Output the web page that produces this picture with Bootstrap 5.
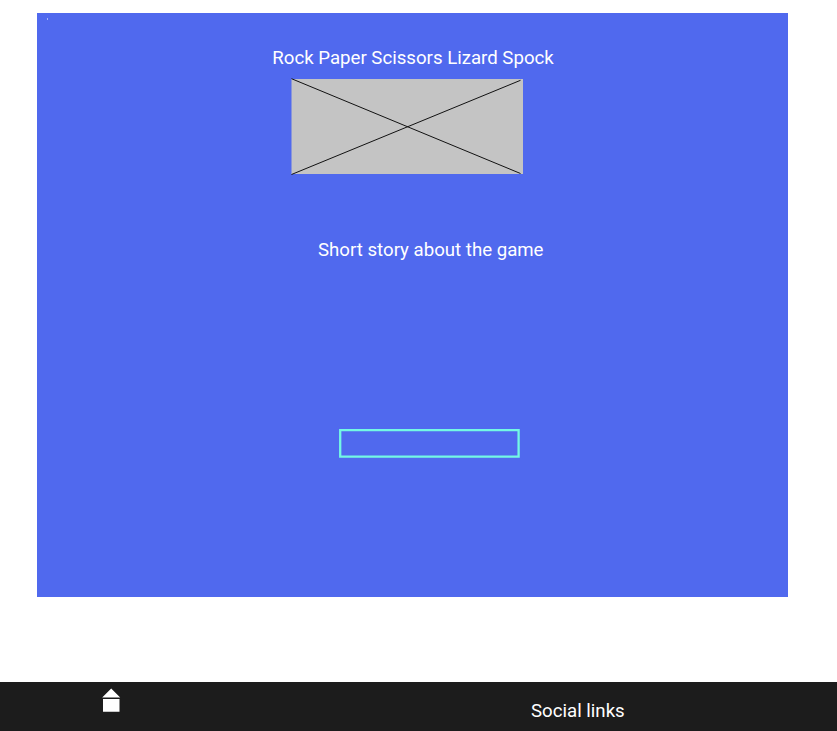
<!DOCTYPE html>
<html lang="en">
<head>
<meta charset="utf-8">
<meta name="viewport" content="width=device-width, initial-scale=1">
<title>Rock Paper Scissors Lizard Spock</title>
<link href="https://cdn.jsdelivr.net/npm/bootstrap@5.3.0/dist/css/bootstrap.min.css" rel="stylesheet">
<style>
body{font-family:Roboto,sans-serif;font-size:18.65px;line-height:22px;height:731px;overflow:hidden}
.stage{background:#5069ee;width:751px;height:584px;margin:13px 0 0 37px;padding-top:34px}
.speck{left:10px;top:5px;width:1px;height:2px}
.game-title{font-size:18.65px;line-height:22px;margin-left:235.3px}
.picture{width:232px;height:97px;margin:9px 0 0 254px}
.story{margin:64px 0 0 281px}
.play{width:181px;height:29px;margin:168px 0 0 302px}
.site-footer{background:#1c1c1c;height:49px;padding:6px 0 0 102px}
.social{margin:12px 0 0 410px}
</style>
</head>
<body class="d-flex flex-column bg-white">
<main class="stage position-relative text-white flex-shrink-0">
<span class="speck position-absolute bg-white opacity-50"></span>
<h1 class="game-title fw-normal mb-0 text-nowrap">Rock Paper Scissors Lizard Spock</h1>
<svg class="picture d-block" viewBox="0 0 232 97" aria-hidden="true"><path fill="#c4c4c4" d="M.5 1H232v95H.5z"/><path d="M.5 .7 229.5 95.5M.5 96.5 229.5 2.3" stroke="#111" fill="none"/></svg>
<p class="story mb-0 text-nowrap">Short story about the game</p>
<button class="play d-block p-0 border-0 bg-transparent" type="button" aria-label="Play"><svg class="d-block" width="181" height="29" viewBox="0 0 181 29"><path d="M1.2 1.2H179.6V27.6H1.2z" fill="none" stroke="#73f8e4" stroke-width="2.3"/></svg></button>
</main>
<footer class="site-footer d-flex align-items-start text-white mt-auto flex-shrink-0">
<a href="#" class="text-white d-flex" aria-label="Home"><svg width="19" height="24" viewBox="0 0 19 24" fill="currentColor"><path d="M9.2 .6 18.2 9.5H.2zM1 11h16.5v12.7H1z"/></svg></a>
<span class="social text-nowrap">Social links</span>
</footer>
<script src="https://cdn.jsdelivr.net/npm/bootstrap@5.3.0/dist/js/bootstrap.bundle.min.js"></script>
</body>
</html>
